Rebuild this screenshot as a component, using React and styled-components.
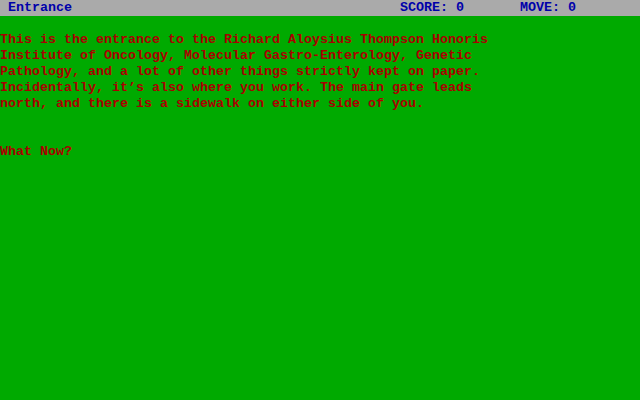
import React from "react";
import styled, { createGlobalStyle } from "styled-components";

const CELL_W = 8;

const Global = createGlobalStyle`
  html, body {
    margin: 0;
    padding: 0;
    background: #00aa00;
  }
  #root {
    width: 640px;
    height: 400px;
    overflow: hidden;
  }
`;

const Screen = styled.div`
  width: 640px;
  height: 400px;
  background: #00aa00;
  display: flex;
  flex-direction: column;
  font-family: "Liberation Mono", "DejaVu Sans Mono", monospace;
  font-size: 13.333px;
  font-weight: bold;
  line-height: 16px;
`;

const StatusBar = styled.div`
  height: 16px;
  background: #aaaaaa;
  color: #0000aa;
  display: flex;
  white-space: pre;
`;

const Field = styled.div`
  width: ${(p) => (p.$cols ? `${p.$cols * CELL_W}px` : "auto")};
  flex: ${(p) => (p.$cols ? "none" : "1")};
`;

const Body = styled.div`
  padding-top: 16px;
  color: #aa0000;
  display: flex;
  flex-direction: column;
`;

const Line = styled.div`
  height: 16px;
  white-space: pre;
`;

const lines = [
  "This is the entrance to the Richard Aloysius Thompson Honoris",
  "Institute of Oncology, Molecular Gastro-Enterology, Genetic",
  "Pathology, and a lot of other things strictly kept on paper.",
  "Incidentally, it\u2019s also where you work. The main gate leads",
  "north, and there is a sidewalk on either side of you.",
  "",
  "",
  "What Now?",
];

export default function App() {
  return (
    <>
      <Global />
      <Screen>
        <StatusBar>
          <Field $cols={1} />
          <Field $cols={49}>Entrance</Field>
          <Field $cols={15}>SCORE: 0</Field>
          <Field>MOVE: 0</Field>
        </StatusBar>
        <Body>
          {lines.map((l, i) => (
            <Line key={i}>{l}</Line>
          ))}
        </Body>
      </Screen>
    </>
  );
}
